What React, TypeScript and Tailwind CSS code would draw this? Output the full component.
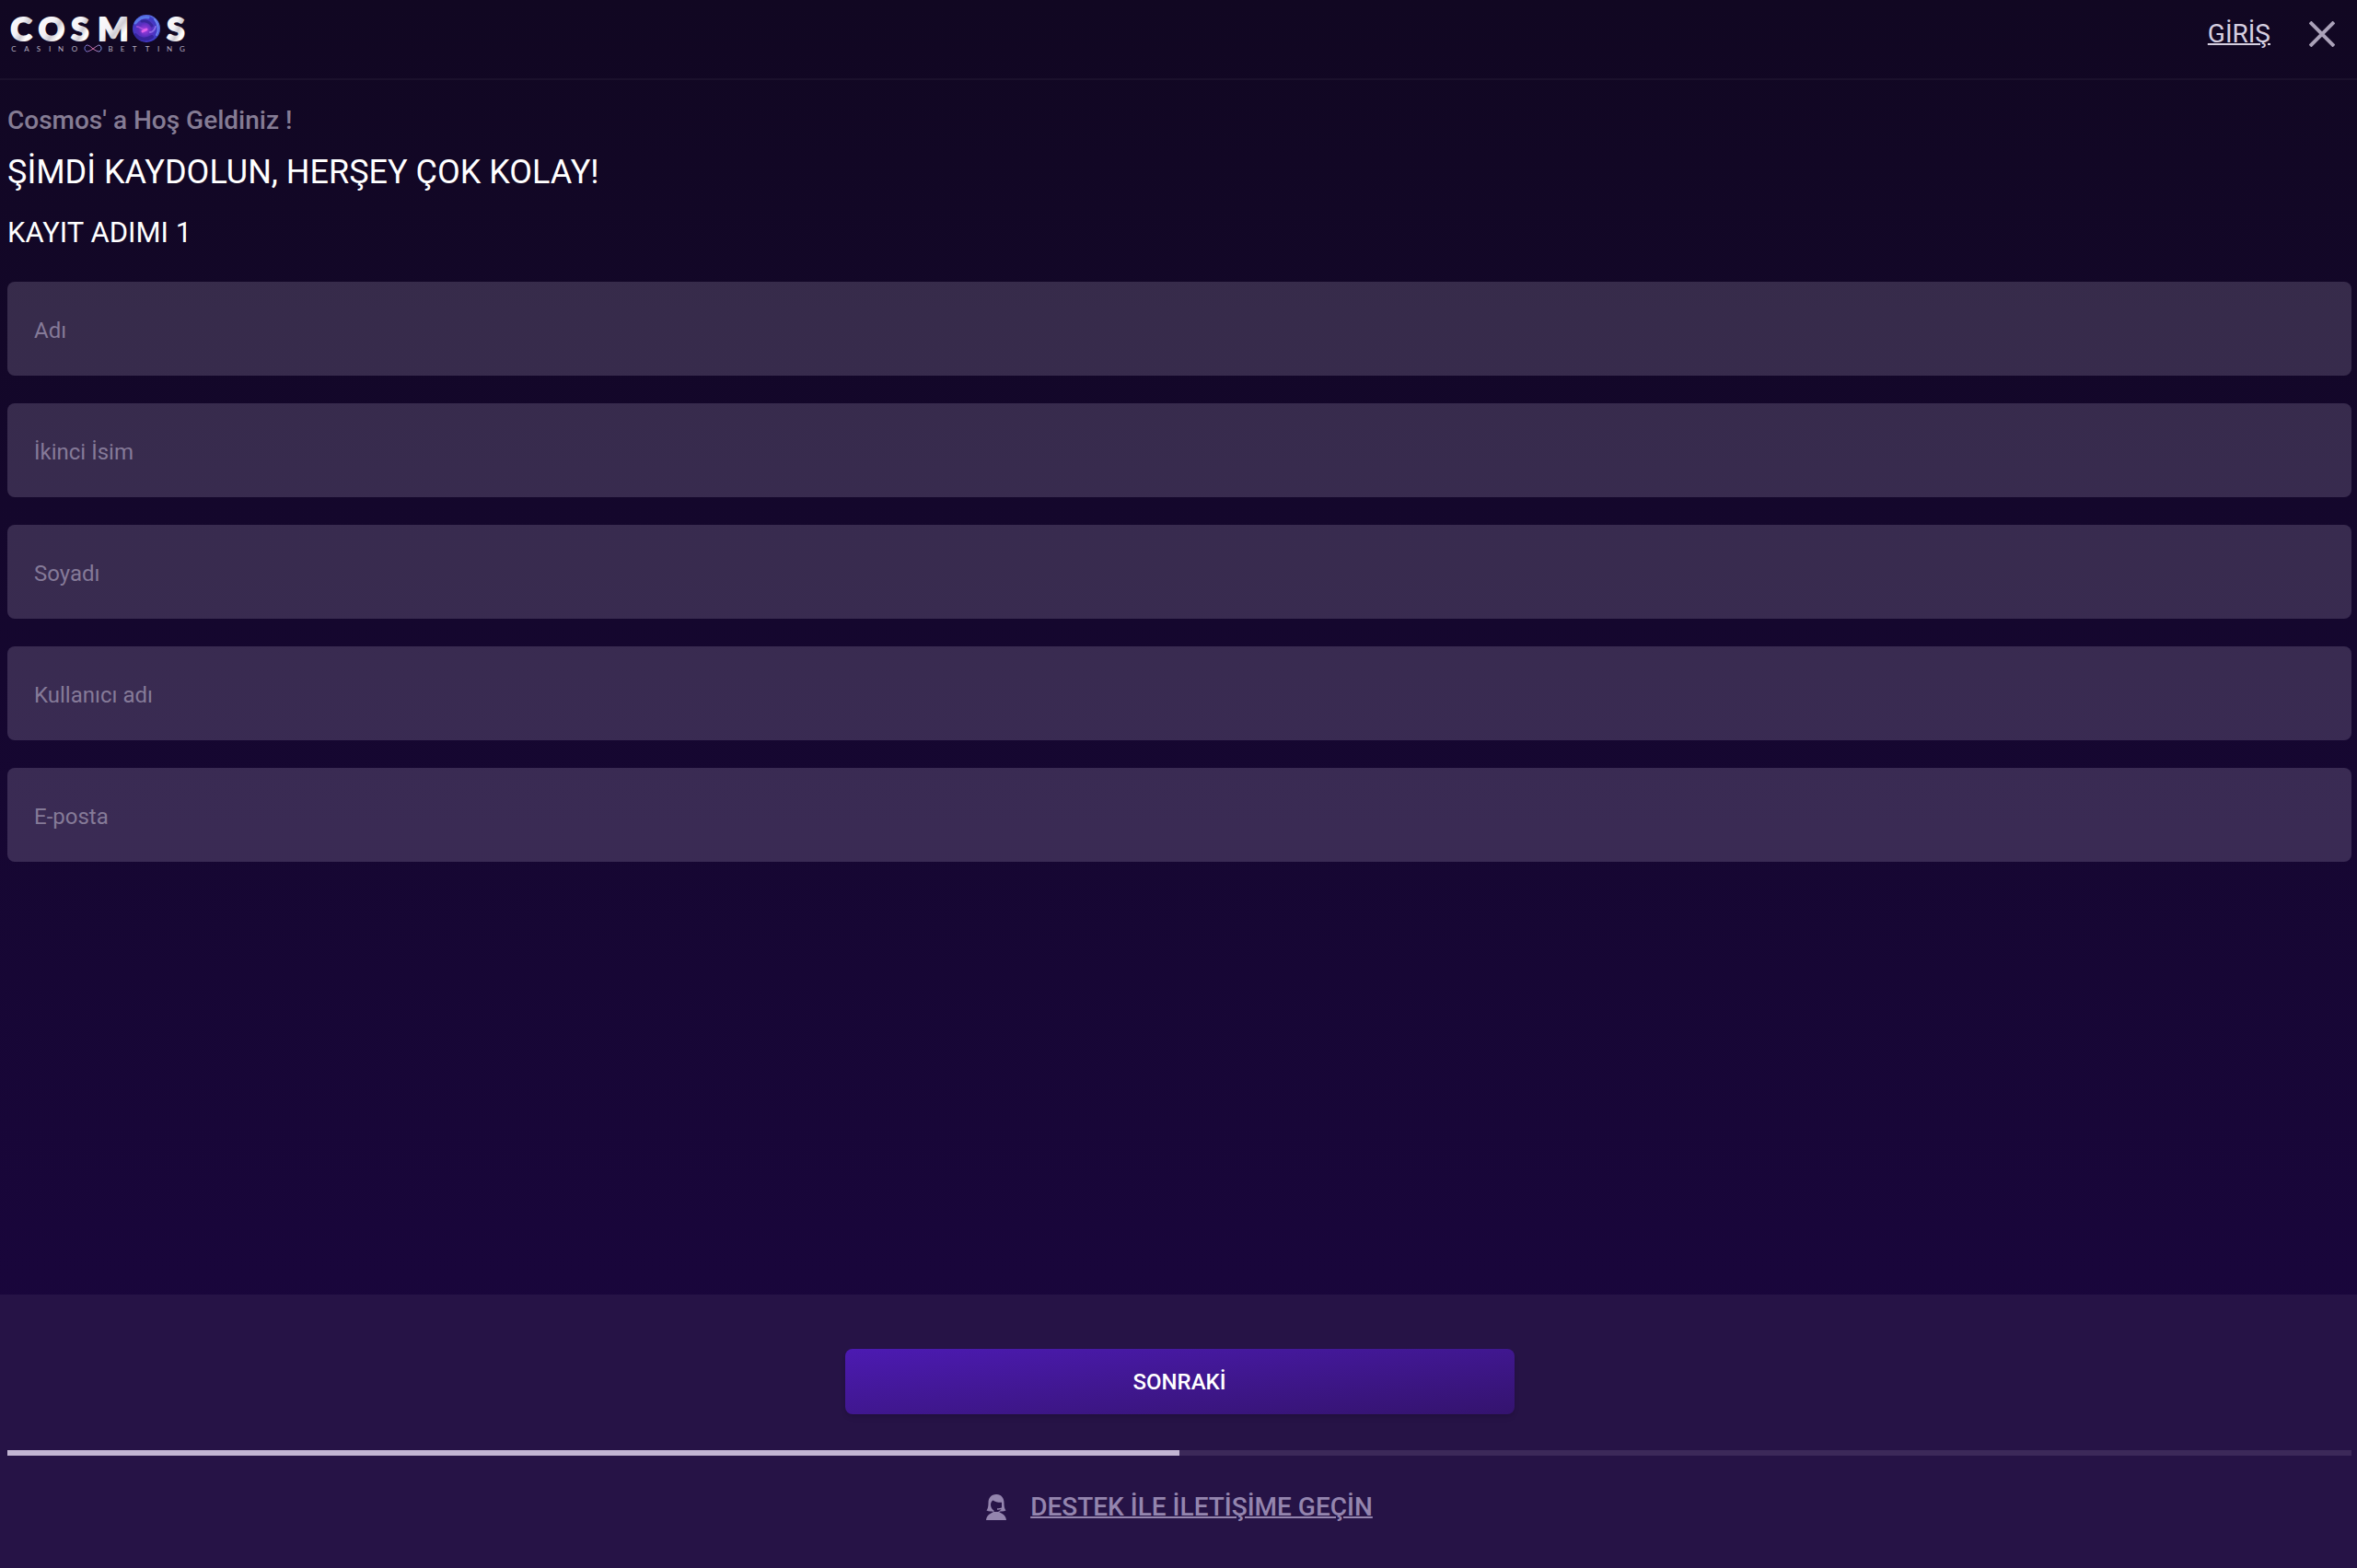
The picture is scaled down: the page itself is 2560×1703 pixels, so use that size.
import { useState } from "react";

const FIELDS = [
  { name: "firstName", label: "Adı", type: "text" },
  { name: "middleName", label: "İkinci İsim", type: "text" },
  { name: "lastName", label: "Soyadı", type: "text" },
  { name: "username", label: "Kullanıcı adı", type: "text" },
  { name: "email", label: "E-posta", type: "email" },
];

const TOTAL_STEPS = 2;

const Logo = () => (
  <svg width="200" height="50" viewBox="0 0 200 50" role="img" aria-label="Cosmos Casino Betting">
    <defs>
      <linearGradient id="metal" x1="0" y1="0" x2="1" y2="1">
        <stop offset="0" stopColor="#ffffff" />
        <stop offset="0.45" stopColor="#f4f2f6" />
        <stop offset="0.6" stopColor="#cfccd3" />
        <stop offset="0.75" stopColor="#ffffff" />
        <stop offset="1" stopColor="#e6e3ea" />
      </linearGradient>
      <radialGradient id="planet" cx="0.45" cy="0.55" r="0.6">
        <stop offset="0" stopColor="#a93fe0" />
        <stop offset="0.4" stopColor="#5a2fc0" />
        <stop offset="0.8" stopColor="#3b3cc4" />
        <stop offset="1" stopColor="#6f8cf5" />
      </radialGradient>
      <linearGradient id="loop" x1="0" y1="0" x2="1" y2="0">
        <stop offset="0" stopColor="#6a7de0" />
        <stop offset="0.5" stopColor="#d06a9c" />
        <stop offset="1" stopColor="#7aa0f0" />
      </linearGradient>
      <clipPath id="planetClip">
        <circle cx="151" cy="23" r="15" />
      </clipPath>
    </defs>
    <g
      fill="url(#metal)"
      stroke="url(#metal)"
      strokeWidth="2"
      strokeLinejoin="round"
      fontFamily="Lato, sans-serif"
      fontWeight="900"
      fontSize="35"
      textAnchor="middle"
    >
      <text x="15" y="36">C</text>
      <text x="48" y="36">O</text>
      <text x="79" y="36">S</text>
      <text x="115" y="36">M</text>
      <text x="183" y="36">S</text>
    </g>
    <circle cx="151" cy="23" r="15" fill="url(#planet)" />
    <g clipPath="url(#planetClip)" fill="none" strokeLinecap="round">
      <path d="M139 17c3-5 9-7 14-6" stroke="#6aa2ff" strokeWidth="3" opacity="0.6" />
      <path d="M146 15c4-1 9 1 11 5" stroke="#1f1a78" strokeWidth="3" opacity="0.5" />
      <path d="M139 30c4 5 12 6 18 2" stroke="#2a1a86" strokeWidth="4" opacity="0.6" />
      <path d="M141 21c3 0 5 3 8 3" stroke="#c65bea" strokeWidth="2" opacity="0.6" />
      <path d="M147 26l4-2" stroke="#f06cf0" strokeWidth="3" opacity="0.8" />
      <path d="M155 27c3 0 5-3 6-6" stroke="#b08cff" strokeWidth="2" opacity="0.6" />
      <path d="M160 13c4 5 5 12 2 17" stroke="#7fa0ff" strokeWidth="2" opacity="0.7" />
    </g>
    <g fill="#b5afc0" fontFamily="Lato, sans-serif" fontSize="8" textAnchor="middle">
      <text x="7 21 34 46 58 73" y="48">CASINO</text>
      <text x="112 125 138 152 164 176 190" y="48">BETTING</text>
    </g>
    <path
      d="M93 45c-3-3-5-4-7-4a4 4 0 0 0 0 7c2 0 4-1 7-3s5-4 7-4a4 4 0 0 1 0 7c-2 0-4-1-7-3z"
      fill="none"
      stroke="url(#loop)"
      strokeWidth="1"
    />
  </svg>
);

const CloseIcon = () => (
  <svg width="28" height="28" viewBox="0 0 28 28" fill="none" stroke="currentColor" strokeWidth="4" aria-hidden="true">
    <path d="M1 1l26 26M27 1L1 27" />
  </svg>
);

const SupportIcon = () => (
  <svg width="22" height="28" viewBox="0 0 22 28" fill="currentColor" aria-hidden="true">
    <path d="M11 0C5.500 0 2.500 4 2.500 9c0 4-.5 6.500-2 8.500 1.500 1 3.500 1.300 5.500 1l2.500.5v-1.500C6.500 16.200 5 14 5 11.200 5 9 6 7.500 7.500 6.500c2.500 2 6 2.500 9.500 2.300v5.400c-1.200.7-2.700 1-5 1v1.500c1.800.1 3.400-.1 4.600-.7-.7 1.100-1.800 1.900-3.100 2.500v.5l2.500-.5c2 .3 4 0 5.500-1-1.500-2-2-4.500-2-8.500 0-5-3-9-8-9z" />
    <path d="M0 28c.3-3.500 2-5.800 5-7.300l3-1.700h6l3 1.700c3 1.500 4.700 3.800 5 7.300z" />
  </svg>
);

const Header = () => (
  <header className="flex h-[87px] items-start justify-between border-b-2 border-[#1b112c] pl-2 pr-6">
    <a href="#" className="mt-2">
      <Logo />
    </a>
    <div className="flex h-[74px] items-center gap-[42px]">
      <a href="#giris" className="text-[28px] text-[#d6cfe0] underline decoration-2">
        GİRİŞ
      </a>
      <button type="button" aria-label="Kapat" className="cursor-pointer text-[#aaa1b8]">
        <CloseIcon />
      </button>
    </div>
  </header>
);

const App = () => {
  const [step] = useState(1);

  return (
    <div className="min-h-screen bg-linear-to-b from-[#110722] to-[#1b0541] font-[Roboto,sans-serif]">
      <form className="flex min-h-screen flex-col" onSubmit={(e) => e.preventDefault()}>
        <Header />

        <main className="flex-1 pt-7 pr-1.5 pb-8 pl-2">
          <p className="text-[28px] leading-8 font-medium text-[#857c94]">Cosmos' a Hoş Geldiniz !</p>
          <h1 className="mt-4 text-[36px] leading-[48px] text-white">ŞİMDİ KAYDOLUN, HERŞEY ÇOK KOLAY!</h1>
          <h2 className="mt-[22px] text-[31px] leading-10 text-white">KAYIT ADIMI {step}</h2>

          <div className="mt-[33px] flex flex-col gap-[30px]">
            {FIELDS.map((field) => (
              <input
                key={field.name}
                name={field.name}
                type={field.type}
                aria-label={field.label}
                placeholder={field.label}
                className="h-[102px] w-full rounded-lg bg-[#ddd0f0]/18 px-[29px] pt-1 text-2xl text-white outline-none placeholder:text-[#857a98]"
              />
            ))}
          </div>
        </main>

        <footer className="bg-[#261346] pt-[59px] pr-1.5 pb-[46px] pl-2">
          <button
            type="submit"
            className="mx-auto block h-[71px] w-full max-w-[727px] cursor-pointer rounded-lg bg-linear-to-br from-[#4c1ab2] to-[#34136e] text-2xl font-medium text-white shadow-md"
          >
            SONRAKİ
          </button>

          <div className="mt-[39px] h-1.5 bg-[#3c2959]">
            <div className="h-full bg-[#c2b5d2]" style={{ width: `${(step / TOTAL_STEPS) * 100}%` }} />
          </div>

          <a
            href="#destek"
            className="mt-9 flex items-center justify-center gap-[26px] text-[28px] leading-10 font-medium text-[#9485ae]"
          >
            <SupportIcon />
            <span className="underline decoration-2">DESTEK İLE İLETİŞİME GEÇİN</span>
          </a>
        </footer>
      </form>
    </div>
  );
};

export default App;
